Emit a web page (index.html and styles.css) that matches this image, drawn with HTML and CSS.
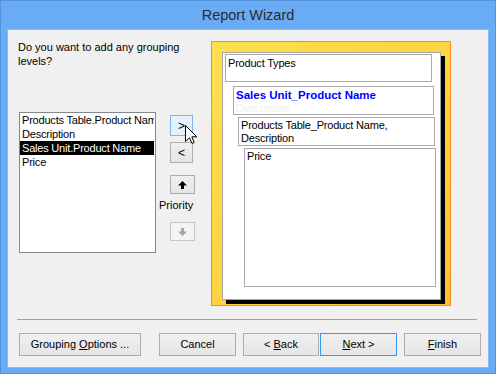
FILE: index.html
```html
<!DOCTYPE html>
<html>
<head>
<meta charset="utf-8">
<link rel="stylesheet" href="styles.css">
</head>
<body>
<div class="window">
  <div class="titlebar">Report Wizard</div>
  <div class="client">
    <div class="main">
      <div class="leftcol">
        <p class="question">Do you want to add any grouping levels?</p>
        <ul class="listbox">
          <li>Products Table.Product Name</li>
          <li>Description</li>
          <li class="selected">Sales Unit.Product Name</li>
          <li>Price</li>
        </ul>
      </div>
      <div class="midcol">
        <button class="btn small hover">&gt;</button>
        <button class="btn small">&lt;</button>
        <button class="btn arrow"><svg width="9" height="8" viewBox="0 0 9 8"><polygon points="4.5,0 9,4.5 6,4.5 6,8 3,8 3,4.5 0,4.5" fill="#000"/></svg></button>
        <span class="priority">Priority</span>
        <button class="btn arrow disabled"><svg width="9" height="8" viewBox="0 0 9 8"><polygon points="4.5,8 9,3.5 6,3.5 6,0 3,0 3,3.5 0,3.5" fill="#a3a3a3"/></svg></button>
        <svg class="cursor" width="13" height="20" viewBox="0 0 13 20"><path d="M0.5 0.5 L0.5 16.5 L4.5 12.7 L7 18.5 L9.2 17.5 L6.8 11.8 L11.8 11.8 Z" fill="#fff" stroke="#000" stroke-width="1" stroke-linejoin="miter"/></svg>
      </div>
      <div class="preview">
        <div class="page">
          <div class="gbox b1">Product Types</div>
          <div class="gbox b2"><span class="bold">Sales Unit_Product Name</span><span class="ghost">Description</span></div>
          <div class="gbox b3">Products Table_Product Name,<br>Description</div>
          <div class="gbox b4">Price</div>
        </div>
      </div>
    </div>
    <div class="separator"></div>
    <div class="footer">
      <button class="fbtn grouping">Grouping <u>O</u>ptions ...</button>
      <button class="fbtn cancel">Cancel</button>
      <button class="fbtn back">&lt; <u>B</u>ack</button>
      <button class="fbtn next"><u>N</u>ext &gt;</button>
      <button class="fbtn finish"><u>F</u>inish</button>
    </div>
  </div>
</div>
</body>
</html>
```
FILE: styles.css
```css
html, body {
  margin: 0;
  padding: 0;
}
body {
  width: 496px;
  height: 374px;
  overflow: hidden;
  font-family: "Liberation Sans", Arial, sans-serif;
  font-size: 11px;
  color: #000;
}
.window {
  box-sizing: border-box;
  width: 496px;
  height: 374px;
  background: #6aabf5;
  border: 1px solid #5592dc;
  padding: 0 6px 5px 6px;
  display: flex;
  flex-direction: column;
}
.titlebar {
  height: 28px;
  line-height: 29px;
  text-align: center;
  font-size: 14.5px;
  color: #2b2b2b;
}
.client {
  box-sizing: border-box;
  height: 339px;
  background: #f0f0f0;
  border: 1px solid #86bbf6;
  display: flex;
  flex-direction: column;
}
.main {
  box-sizing: border-box;
  height: 276px;
  padding-top: 11px;
  display: flex;
}
.leftcol {
  box-sizing: border-box;
  width: 151px;
  padding-left: 10px;
}
.question {
  margin: -1px 0 0 0;
  width: 175px;
  line-height: 14px;
  font-size: 11px;
}
.listbox {
  box-sizing: border-box;
  list-style: none;
  margin: 44px 0 0 1px;
  padding: 0;
  width: 137px;
  height: 141px;
  background: #fff;
  border: 1px solid #828790;
  overflow: hidden;
}
.listbox li {
  height: 14px;
  line-height: 14px;
  padding-left: 2px;
  white-space: nowrap;
  overflow: hidden;
  letter-spacing: -0.2px;
  margin-right: 1px;
}
.listbox li.selected {
  background: #000;
  color: #fff;
}
.midcol {
  position: relative;
  box-sizing: border-box;
  width: 52px;
  padding-top: 74px;
  display: flex;
  flex-direction: column;
  align-items: flex-start;
}
.btn {
  box-sizing: border-box;
  margin: 0;
  padding: 0;
  font-family: "Liberation Sans", Arial, sans-serif;
  font-size: 11px;
  color: #000;
  background: linear-gradient(#f0f0f0, #e5e5e5);
  border: 1px solid #acacac;
  border-radius: 0;
  display: flex;
  align-items: center;
  justify-content: center;
}
.small {
  width: 23px;
  height: 21px;
  margin-left: 11px;
  font-size: 12px;
}
.small + .small {
  margin-top: 6px;
}
.hover {
  background: #e5f1fb;
  border-color: #7eb4ea;
}
.arrow {
  width: 25px;
  height: 19px;
  margin-left: 11px;
  margin-top: 12px;
}
.arrow svg {
  display: block;
}
.arrow.disabled {
  margin-top: 10px;
  background: #f4f4f4;
  border-color: #c5c5c5;
}
.priority {
  margin-top: 4px;
  line-height: 14px;
  height: 14px;
}
.cursor {
  position: absolute;
  left: 26px;
  top: 84px;
}
.preview {
  box-sizing: border-box;
  width: 240px;
  height: 265px;
  border: 1px solid #f7901e;
  background: linear-gradient(135deg, #ffdf4e 0%, #fdd241 55%, #f9c03c 100%);
  padding: 10px;
}
.page {
  box-sizing: border-box;
  width: 219px;
  height: 248px;
  background: #fff;
  border: 1px solid #a7a7a7;
  box-shadow: 4px 4px 0 #000;
  display: flex;
  flex-direction: column;
  align-items: flex-start;
}
.gbox {
  box-sizing: border-box;
  border: 1px solid #aaaaae;
  background: #fff;
  line-height: 13px;
  letter-spacing: -0.2px;
  padding: 0 2px;
  white-space: nowrap;
}
.b1 {
  margin: 1px 0 0 2px;
  width: 207px;
  height: 28px;
  padding-top: 2px;
}
.b2 {
  margin: 4px 0 0 10px;
  width: 201px;
  height: 29px;
  padding-top: 1px;
  display: flex;
  flex-direction: column;
}
.bold {
  font-weight: bold;
  font-size: 11.5px;
  letter-spacing: 0;
  color: #0000ff;
  line-height: 14px;
}
.ghost {
  color: #f0f0f0;
  line-height: 12px;
}
.b3 {
  margin: 2px 0 0 15px;
  width: 197px;
  height: 29px;
  padding-top: 1px;
}
.b4 {
  margin: 2px 0 0 21px;
  width: 192px;
  height: 139px;
  padding-top: 1px;
}
.separator {
  margin: 13px 11px 0 9px;
  height: 1px;
  background: #a0a0a0;
}
.footer {
  display: flex;
  margin-top: 13px;
  padding-left: 11px;
}
.fbtn {
  box-sizing: border-box;
  display: block;
  margin: 0;
  padding: 0;
  height: 23px;
  line-height: 21px;
  text-align: center;
  white-space: pre;
  font-family: "Liberation Sans", Arial, sans-serif;
  font-size: 11px;
  color: #000;
  background: linear-gradient(#f0f0f0, #e5e5e5);
  border: 1px solid #acacac;
  border-radius: 0;
}
.grouping {
  width: 122px;
}
.cancel {
  width: 77px;
  margin-left: 18px;
}
.back {
  width: 76px;
  margin-left: 7px;
}
.next {
  width: 77px;
  margin-left: 1px;
  border-color: #3399ff;
}
.finish {
  width: 77px;
  margin-left: 7px;
}
.fbtn u {
  text-decoration: underline;
}
```
